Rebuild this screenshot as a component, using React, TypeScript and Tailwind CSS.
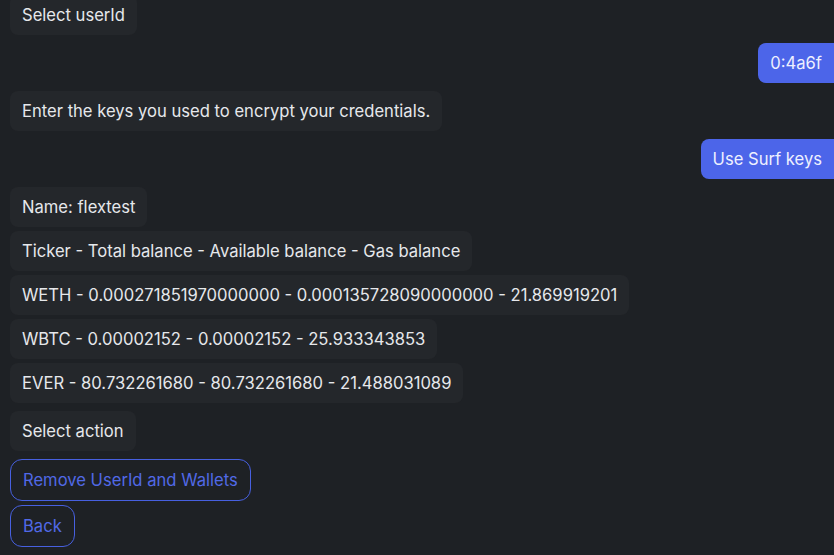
type Msg = { side: "left" | "right"; lines: string[] };

const messages: Msg[] = [
  { side: "left", lines: ["Select userId"] },
  { side: "right", lines: ["0:4a6f"] },
  { side: "left", lines: ["Enter the keys you used to encrypt your credentials."] },
  { side: "right", lines: ["Use Surf keys"] },
  {
    side: "left",
    lines: [
      "Name: flextest",
      "Ticker - Total balance - Available balance - Gas balance",
      "WETH - 0.000271851970000000 - 0.000135728090000000 - 21.869919201",
      "WBTC - 0.00002152 - 0.00002152 - 25.933343853",
      "EVER - 80.732261680 - 80.732261680 - 21.488031089",
    ],
  },
  { side: "left", lines: ["Select action"] },
];

const actions = ["Remove UserId and Wallets", "Back"];

export default function App() {
  return (
    <div
      className="min-h-screen bg-[#1e2125] text-[16.6px] text-[#e6e8eb] overflow-hidden"
      style={{ fontFamily: "Inter, 'Noto Sans', sans-serif" }}
    >
      <div className="flex flex-col gap-2 pl-[10px] -mt-[5px]">
        {messages.map((m, i) =>
          m.side === "right" ? (
            <div key={i} className="flex justify-end">
              <div className="rounded-l-lg bg-[#4c65e9] px-3 py-2 leading-6 text-[#eef0ff]">
                {m.lines[0]}
              </div>
            </div>
          ) : (
            <div key={i} className="flex flex-col items-start gap-1">
              {m.lines.map((l) => (
                <div key={l} className="rounded-lg bg-[#24272b] px-3 py-2 leading-6">
                  {l}
                </div>
              ))}
            </div>
          )
        )}
        <div className="flex flex-col items-start gap-1">
          {actions.map((a) => (
            <button
              key={a}
              className="rounded-xl border border-[#4760e0] px-3 py-[8px] leading-6 text-[#5169e6]"
            >
              {a}
            </button>
          ))}
        </div>
      </div>
    </div>
  );
}
